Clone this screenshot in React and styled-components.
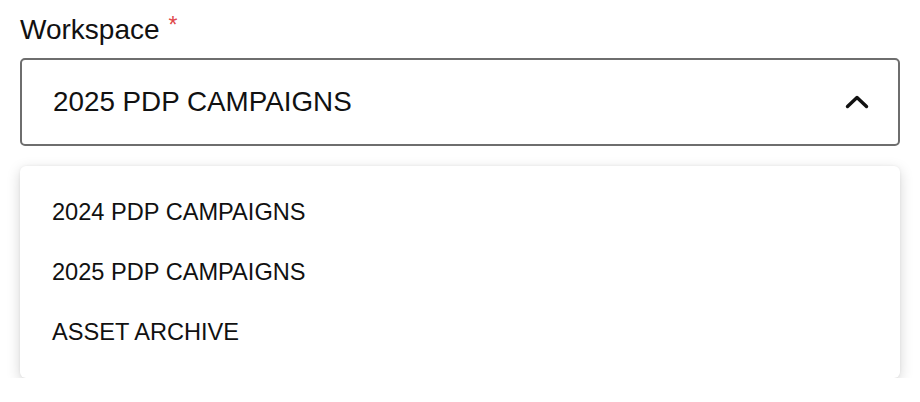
import styled, { createGlobalStyle } from "styled-components";

const GlobalStyle = createGlobalStyle`
  body {
    margin: 0;
    background: #fff;
    font-family: "Liberation Sans", Arial, Helvetica, sans-serif;
  }
`;

const Field = styled.div`
  width: 880px;
  padding: 14px 20px 0 20px;
  display: flex;
  flex-direction: column;
`;

const Label = styled.label`
  display: block;
  font-size: 28px;
  line-height: 32px;
  color: #111;
  margin-bottom: 12px;
`;

const Required = styled.span`
  color: #e0484a;
  font-size: 23px;
  line-height: 0;
  margin-left: 9px;
  vertical-align: 6px;
`;

const SelectBox = styled.div`
  box-sizing: border-box;
  height: 88px;
  border: 2px solid #6e6e6e;
  border-radius: 5px;
  display: flex;
  align-items: center;
  justify-content: space-between;
  padding: 0 29px 0 31px;
  font-size: 27.8px;
  color: #111;
`;

const Menu = styled.ul`
  list-style: none;
  margin: 20px 0 0 0;
  padding: 16px 0;
  border-radius: 6px;
  background: #fff;
  box-shadow: 0 4px 14px rgba(0, 0, 0, 0.17), 0 0 3px rgba(0, 0, 0, 0.06);
`;

const Item = styled.li`
  height: 60px;
  display: flex;
  align-items: center;
  padding: 0 32px;
  font-size: 23.6px;
  color: #111;
`;

const Chevron = () => (
  <svg width="24" height="14" viewBox="0 0 24 14">
    <polyline
      points="2.5,11.5 12,2.5 21.5,11.5"
      fill="none"
      stroke="#111"
      strokeWidth="3.4"
      strokeLinecap="round"
      strokeLinejoin="round"
    />
  </svg>
);

const options = ["2024 PDP CAMPAIGNS", "2025 PDP CAMPAIGNS", "ASSET ARCHIVE"];

const App = () => {
  return (
    <>
      <GlobalStyle />
      <Field>
        <Label>
          Workspace<Required>*</Required>
        </Label>
        <SelectBox>
          <span>2025 PDP CAMPAIGNS</span>
          <Chevron />
        </SelectBox>
        <Menu>
          {options.map((o) => (
            <Item key={o}>{o}</Item>
          ))}
        </Menu>
      </Field>
    </>
  );
};

export default App;
